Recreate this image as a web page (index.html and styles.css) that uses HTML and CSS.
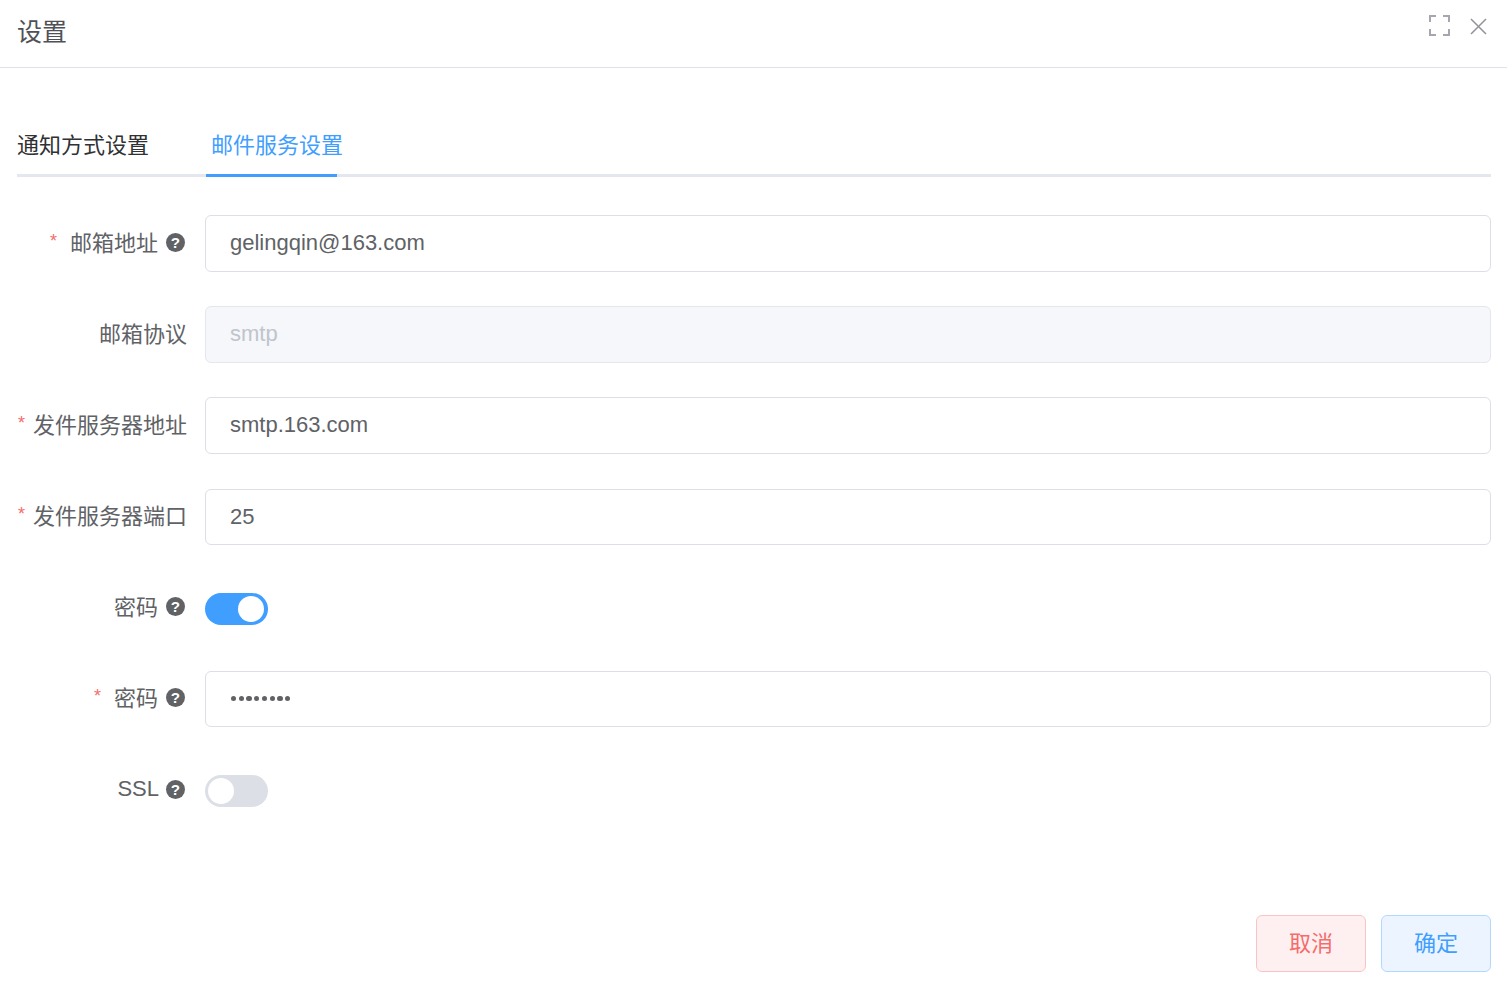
FILE: index.html
```html
<!DOCTYPE html>
<html lang="zh">
<head>
<meta charset="utf-8">
<title>设置</title>
<link rel="stylesheet" href="styles.css">
</head>
<body>
<div class="dialog">
  <header class="header">
    <span class="title">设置</span>
    <div class="actions">
      <svg class="icon-full" width="21" height="21" viewBox="0 0 21 21" fill="none" stroke="#a4a7ae" stroke-width="2"><path d="M1 7V1h6M14 1h6v6M1 14v6h6M14 20h6v-6"/></svg>
      <svg class="icon-close" width="17" height="17" viewBox="0 0 17 17" fill="none" stroke="#909399" stroke-width="1.5"><path d="M1 1l15 15M16 1L1 16"/></svg>
    </div>
  </header>
  <main class="body">
    <nav class="tabs">
      <span class="tab">通知方式设置</span>
      <span class="tab tab-active">邮件服务设置</span>
    </nav>
    <form class="form">
      <div class="row">
        <label class="label"><span class="star star-far">*</span>邮箱地址<svg class="help" viewBox="0 0 20 20"><circle cx="10" cy="10" r="10" fill="#606266"/><text x="10" y="15.5" text-anchor="middle" class="help-q">?</text></svg></label>
        <div class="input">gelingqin@163.com</div>
      </div>
      <div class="row">
        <label class="label">邮箱协议</label>
        <div class="input input-disabled">smtp</div>
      </div>
      <div class="row">
        <label class="label"><span class="star">*</span>发件服务器地址</label>
        <div class="input">smtp.163.com</div>
      </div>
      <div class="row">
        <label class="label"><span class="star">*</span>发件服务器端口</label>
        <div class="input">25</div>
      </div>
      <div class="row">
        <label class="label">密码<svg class="help" viewBox="0 0 20 20"><circle cx="10" cy="10" r="10" fill="#606266"/><text x="10" y="15.5" text-anchor="middle" class="help-q">?</text></svg></label>
        <span class="switch switch-on"><span class="knob"></span></span>
      </div>
      <div class="row">
        <label class="label"><span class="star star-far">*</span>密码<svg class="help" viewBox="0 0 20 20"><circle cx="10" cy="10" r="10" fill="#606266"/><text x="10" y="15.5" text-anchor="middle" class="help-q">?</text></svg></label>
        <div class="input input-pass"><span class="dots"><i></i><i></i><i></i><i></i><i></i><i></i><i></i><i></i></span></div>
      </div>
      <div class="row">
        <label class="label"><span class="latin">SSL</span><svg class="help" viewBox="0 0 20 20"><circle cx="10" cy="10" r="10" fill="#606266"/><text x="10" y="15.5" text-anchor="middle" class="help-q">?</text></svg></label>
        <span class="switch"><span class="knob"></span></span>
      </div>
    </form>
  </main>
  <footer class="footer">
    <button type="button" class="btn btn-cancel">取消</button>
    <button type="button" class="btn btn-ok">确定</button>
  </footer>
</div>
</body>
</html>
```
FILE: styles.css
```css
* { box-sizing: border-box; }
html, body { margin: 0; padding: 0; background: #fff; }
body { font-family: "Liberation Sans", "Noto Sans CJK SC", sans-serif; color: #606266; }
.dialog { height: 989px; display: flex; flex-direction: column; overflow: hidden; }
.header { height: 68px; flex: none; border-bottom: 1px solid #dfe1e6; padding: 0 17px; display: flex; justify-content: space-between; }
.title { font-size: 25px; line-height: 64px; color: #4f5156; }
.actions { display: flex; align-items: flex-start; gap: 20px; padding-top: 15px; margin-right: 1px; }
.icon-close { margin-top: 3px; margin-right: 2px; }
.body { flex: 1; padding: 0 16px 0 17px; }
.tabs { margin-top: 46px; height: 63px; border-bottom: 3px solid #e4e7ed; display: flex; font-size: 22px; }
.tab { color: #303133; width: 189px; line-height: 64px; height: 63px; white-space: nowrap; }
.tab-active { color: #409eff; width: 131px; border-bottom: 3px solid #409eff; text-indent: 5px; }
.form { margin-top: 38.3px; display: flex; flex-direction: column; gap: 34.58px; }
.row { height: 56.5px; display: flex; align-items: center; gap: 18px; }
.label { width: 170px; flex: none; font-size: 22px; display: flex; align-items: center; justify-content: flex-end; margin-top: -6px; white-space: nowrap; }
.latin { margin: 4px -1px 0 0; }
.star { color: #f56c6c; font-size: 18px; margin: 2px 8px 0 0; }
.star-far { margin-right: 13px; }
.help { width: 19px; height: 19px; margin: 4px 2px 0 8px; flex: none; }
.help-q { fill: #fff; font-size: 16px; font-weight: 700; font-family: "Liberation Sans", sans-serif; }
.input { flex: 1; height: 100%; border: 1px solid #dcdfe6; border-radius: 6px; padding: 0 24px; font-size: 22px; line-height: 53px; color: #606266; }
.input-disabled { background: #f5f7fa; border-color: #e4e7ed; color: #c0c4cc; line-height: 54px; }
.input-pass { display: flex; align-items: center; }
.dots { display: flex; gap: 2.65px; margin: 0 0 0 1px; }
.dots i { width: 5.1px; height: 5.1px; border-radius: 50%; background: #606266; display: block; }
.switch { width: 63px; height: 32px; border-radius: 16px; background: #dcdfe6; position: relative; display: block; margin-top: 2px; }
.switch-on { background: #409eff; }
.knob { position: absolute; top: 3px; left: 3px; width: 26px; height: 26px; border-radius: 50%; background: #fff; }
.switch-on .knob { left: 33px; }
.footer { flex: none; display: flex; justify-content: flex-end; gap: 15px; padding: 0 16px 17px 0; }
.btn { width: 110px; height: 57px; border-radius: 6px; font-family: inherit; font-size: 22px; border: 1px solid; padding: 0 0 5px; }
.btn-cancel { background: #fef0f0; border-color: #fbc4c4; color: #f56c6c; }
.btn-ok { background: #ecf5ff; border-color: #b3d8ff; color: #409eff; }
```
